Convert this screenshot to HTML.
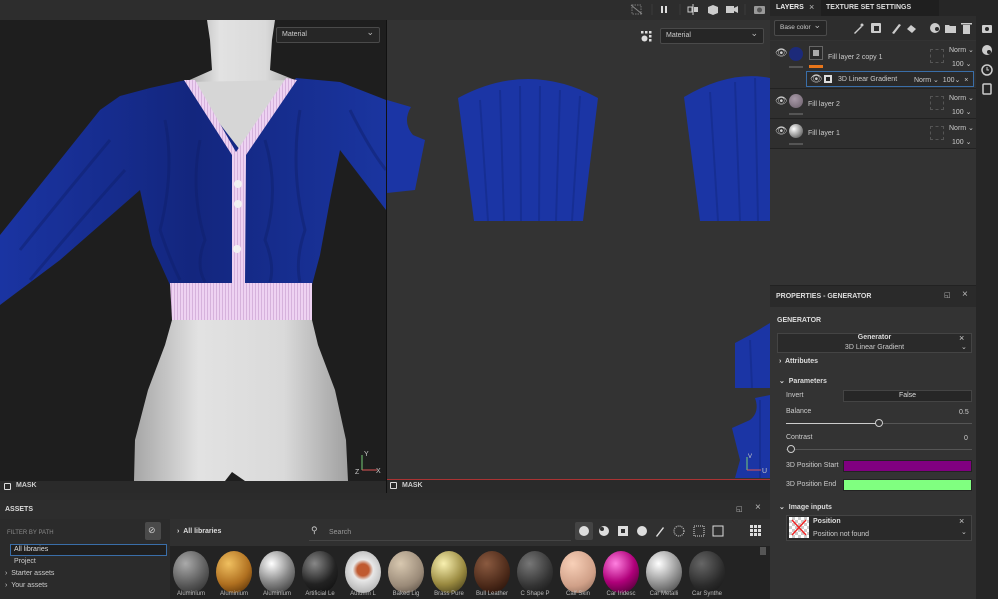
<!DOCTYPE html>
<html><head><meta charset="utf-8">
<style>
*{margin:0;padding:0;box-sizing:border-box}
body{width:998px;height:599px;overflow:hidden;background:#2b2b2b;font-family:"Liberation Sans",sans-serif;color:#ddd;font-size:7px;position:relative}
.abs{position:absolute}
.t{position:absolute;white-space:nowrap}
.b{font-weight:bold}
.dd{position:absolute;border:1px solid #4a4a4a;background:#262626;border-radius:2px;color:#ccc;font-size:7px;padding:3px 5px}
.dd:after{content:"⌄";position:absolute;right:5px;top:-1px;font-size:9px;color:#bbb}
.sph{position:absolute;width:36px;height:42px;border-radius:50%;top:551px}
.lbl{position:absolute;top:591px;font-size:6px;color:#bbb;width:40px;text-align:center}
</style></head><body>

<div class="abs" style="left:0;top:0;width:770px;height:20px;background:#2d2d2d"></div>
<svg class="abs" style="left:628px;top:2px" width="142" height="15" viewBox="0 0 142 15">
 <rect x="4" y="3" width="9" height="9" fill="none" stroke="#777" stroke-dasharray="1.5 1"/><line x1="3" y1="3" x2="14" y2="12" stroke="#888"/>
 <line x1="24" y1="2" x2="24" y2="13" stroke="#3a3a3a"/>
 <rect x="33" y="4" width="2" height="7" fill="#ddd"/><rect x="37" y="4" width="2" height="7" fill="#ddd"/>
 <line x1="52" y1="2" x2="52" y2="13" stroke="#3a3a3a"/>
 <line x1="65" y1="2" x2="65" y2="13" stroke="#ccc"/><rect x="60" y="5" width="4" height="5" fill="none" stroke="#ccc"/><rect x="66" y="5" width="4" height="5" fill="#ccc"/>
 <path d="M80 5l5-2 5 2v6l-5 2-5-2z" fill="#ccc"/>
 <rect x="98" y="4" width="8" height="7" fill="#ccc"/><path d="M106 6l4-2v7l-4-2z" fill="#ccc"/>
 <line x1="117" y1="2" x2="117" y2="13" stroke="#3a3a3a"/>
 <rect x="126" y="4" width="11" height="8" rx="1" fill="#999"/><circle cx="131.5" cy="8" r="2.5" fill="#555"/>
</svg>

<div class="abs" style="left:0;top:20px;width:386px;height:461px;background:#1e1e1e"></div>
<svg class="abs" style="left:0;top:20px" width="386" height="461" viewBox="0 20 386 461">
 <defs>
  <linearGradient id="skin" x1="0" x2="1"><stop offset="0" stop-color="#a6a6a6"/><stop offset=".3" stop-color="#e2e2e2"/><stop offset=".7" stop-color="#dadada"/><stop offset="1" stop-color="#a0a0a0"/></linearGradient>
  <linearGradient id="blue" x1="0" x2="1"><stop offset="0" stop-color="#1a34a2"/><stop offset=".5" stop-color="#13267e"/><stop offset="1" stop-color="#1a35a0"/></linearGradient>
  <pattern id="rib" width="3" height="3" patternUnits="userSpaceOnUse"><rect width="3" height="3" fill="#eed2f2"/><rect width="1" height="3" fill="#d6b2dc"/></pattern>
 </defs>
 <path d="M207 20 L275 20 L272 40 L270 70 L300 82 L185 82 L212 70 L210 40 Z" fill="url(#skin)"/>
 <path d="M186 82 L296 80 L240 150 Z" fill="#d6d6d6"/>
 <path d="M186 80 L150 88 L120 96 L100 110 L0 235 L0 305 L60 260 L140 190 L152 245 L170 285 L312 285 L320 255 L330 200 L340 150 L386 210 L386 100 L340 82 L296 78 L240 150 Z" fill="url(#blue)"/>
 <g stroke="#0f1f6a" stroke-width="3" fill="none" opacity=".45">
  <path d="M165 120 Q175 170 160 230 Q170 260 180 280"/><path d="M200 140 Q190 190 205 240 Q195 265 205 282"/>
  <path d="M265 140 Q280 190 265 240 Q275 265 270 282"/><path d="M300 110 Q290 170 305 230 Q295 260 300 282"/>
  <path d="M20 250 Q60 200 110 140"/><path d="M30 280 Q80 220 125 170"/><path d="M350 110 Q370 150 386 170"/>
 </g>
 <path d="M172 320 L312 320 L318 345 L335 390 L346 440 L348 481 L134 481 L135 440 L148 390 L165 345 Z" fill="url(#skin)"/>
 <path d="M225 481 L232 472 L245 481 Z" fill="#1e1e1e"/>
 <path d="M170 283 L312 283 L312 320 L172 320 Z" fill="url(#rib)"/>
 <path d="M184 80 L195 80 L236 152 L286 78 L297 80 L246 155 L245 283 L232 283 L232 155 Z" fill="url(#rib)"/>
 <circle cx="238" cy="184" r="4" fill="#f2f2f2"/><circle cx="238" cy="204" r="4" fill="#f2f2f2"/><circle cx="237" cy="249" r="4" fill="#f2f2f2"/>
 <g stroke-width="1"><line x1="362" y1="470" x2="362" y2="455" stroke="#7c7"/><line x1="362" y1="470" x2="377" y2="470" stroke="#d55"/></g>
 <text x="364" y="456" fill="#ccc" font-size="7" font-family="Liberation Sans">Y</text><text x="376" y="473" fill="#ccc" font-size="7" font-family="Liberation Sans">X</text><text x="355" y="474" fill="#ccc" font-size="7" font-family="Liberation Sans">Z</text>
</svg>
<div class="dd" style="left:276px;top:27px;width:104px;height:16px">Material</div>
<div class="abs" style="left:0;top:481px;width:386px;height:12px;background:#2a2a2a"></div>
<div class="abs" style="left:4px;top:483px;width:7px;height:7px;border:1.5px solid #ddd;border-radius:1px"></div>
<div class="t b" style="left:16px;top:482px;font-size:7px;color:#ccc">MASK</div>

<div class="abs" style="left:386px;top:20px;width:1px;height:473px;background:#111"></div>
<div class="abs" style="left:387px;top:20px;width:383px;height:460px;background:#333"></div>
<svg class="abs" style="left:387px;top:20px" width="383" height="460" viewBox="387 20 383 460">
 <g fill="#1b35a5">
  <path d="M458 98 Q528 60 598 98 L583 221 L474 221 Z"/>
  <path d="M387 100 L411 107 Q402 122 413 135 L425 140 L415 190 L387 193 Z"/>
  <path d="M684 97 Q730 70 770 78 L770 221 L700 221 Z"/>
  <path d="M770 323 L750 335 L735 343 L735 388 L770 388 Z"/>
  <path d="M770 395 L755 398 Q760 412 750 420 L732 428 L740 460 L735 478 L770 478 Z"/>
 </g>
 <g stroke="#142a88" stroke-width="2" opacity=".6">
  <line x1="480" y1="100" x2="488" y2="221"/><line x1="500" y1="90" x2="504" y2="221"/><line x1="520" y1="86" x2="521" y2="221"/><line x1="540" y1="86" x2="539" y2="221"/><line x1="560" y1="90" x2="556" y2="221"/><line x1="580" y1="96" x2="572" y2="221"/>
  <line x1="710" y1="92" x2="718" y2="221"/><line x1="735" y1="82" x2="740" y2="221"/><line x1="755" y1="78" x2="758" y2="221"/>
  <line x1="750" y1="340" x2="752" y2="388"/><line x1="760" y1="400" x2="760" y2="478"/>
 </g>
 <line x1="747" y1="470" x2="747" y2="457" stroke="#7c7"/><line x1="747" y1="470" x2="761" y2="470" stroke="#d55"/>
 <text x="748" y="458" fill="#ccc" font-size="6" font-family="Liberation Sans">V</text><text x="762" y="473" fill="#ccc" font-size="7" font-family="Liberation Sans">U</text>
</svg>
<svg class="abs" style="left:641px;top:31px" width="12" height="12"><g fill="#ddd"><rect x="0" y="0" width="2.5" height="2.5"/><rect x="4" y="0" width="2.5" height="2.5"/><rect x="8" y="0" width="2.5" height="2.5"/><circle cx="3.5" cy="7.5" r="3"/><rect x="8" y="4" width="2.5" height="2.5"/><rect x="8" y="8" width="2.5" height="2.5"/></g></svg>
<div class="dd" style="left:660px;top:28px;width:104px;height:16px">Material</div>
<div class="abs" style="left:387px;top:479px;width:383px;height:1px;background:#a33"></div>
<div class="abs" style="left:387px;top:480px;width:383px;height:13px;background:#2a2a2a"></div>
<div class="abs" style="left:390px;top:482px;width:7px;height:7px;border:1.5px solid #ddd;border-radius:1px"></div>
<div class="t b" style="left:402px;top:482px;font-size:7px;color:#ccc">MASK</div>

<div class="abs" style="left:770px;top:0;width:206px;height:599px;background:#333"></div>
<div class="abs" style="left:770px;top:0;width:206px;height:16px;background:#262626"></div>
<div class="abs" style="left:821px;top:0;width:118px;height:16px;background:#1f1f1f"></div>
<div class="t b" style="left:776px;top:4px;color:#eee">LAYERS</div>
<div class="t" style="left:809px;top:2px;font-size:9px;color:#bbb">×</div>
<div class="t b" style="left:826px;top:4px;color:#ddd">TEXTURE SET SETTINGS</div>
<div class="abs" style="left:770px;top:16px;width:206px;height:24px;background:#2d2d2d"></div>
<div class="dd" style="left:774px;top:20px;width:53px;height:16px;font-size:6.5px">Base color</div>
<svg class="abs" style="left:852px;top:21px" width="122" height="14"><g fill="#ccc"><path d="M2 12l7-7 1 1-7 7z"/><circle cx="10" cy="4" r="1.5"/><rect x="19" y="2" width="10" height="10" rx="1"/><path d="M40 12l7-9 2 1-7 9z"/><path d="M59 4l5 4-4 4-5-4z"/><circle cx="83" cy="7" r="5"/><path d="M93 4h4l1 1h6v7h-11z"/><rect x="111" y="4" width="7" height="9"/><rect x="109" y="2" width="11" height="1.5"/></g><rect x="22" y="5" width="5" height="5" fill="#2d2d2d"/><circle cx="85" cy="8" r="2" fill="#2d2d2d"/></svg>

<div class="abs" style="left:770px;top:41px;width:206px;height:108px;background:#2f2f2f"></div>
<div class="abs" style="left:770px;top:88px;width:206px;height:1px;background:#222"></div>
<div class="abs" style="left:770px;top:118px;width:206px;height:1px;background:#222"></div>
<div class="abs" style="left:770px;top:148px;width:206px;height:1px;background:#222"></div>
<div class="t" style="left:775px;top:48px;font-size:10px;color:#ccc">👁</div>
<div class="abs" style="left:789px;top:47px;width:14px;height:14px;border-radius:50%;background:#1c2a7a"></div>
<div class="abs" style="left:789px;top:66px;width:14px;height:2px;background:#555"></div>
<div class="abs" style="left:809px;top:46px;width:14px;height:14px;border:1px solid #666;background:#2a2a2a"></div>
<div class="abs" style="left:813px;top:50px;width:6px;height:6px;background:#aaa"></div>
<div class="abs" style="left:809px;top:65px;width:14px;height:3px;background:#e8751a"></div>
<div class="t" style="left:828px;top:54px;color:#ccc">Fill layer 2 copy 1</div>
<div class="abs" style="left:930px;top:49px;width:14px;height:14px;border:1px dashed #555"></div>
<div class="t" style="left:949px;top:46px;color:#ccc">Norm ⌄</div>
<div class="t" style="left:952px;top:60px;color:#ccc">100 ⌄</div>
<div class="abs" style="left:806px;top:71px;width:168px;height:16px;border:1px solid #3a6ea8;background:#2a2a2a"></div>
<div class="t" style="left:810px;top:74px;font-size:10px;color:#ccc">👁</div>
<div class="abs" style="left:824px;top:75px;width:8px;height:8px;background:#ddd"></div>
<div class="abs" style="left:826px;top:77px;width:4px;height:4px;background:#222"></div>
<div class="t" style="left:838px;top:76px;color:#ccc">3D Linear Gradient</div>
<div class="t" style="left:914px;top:76px;color:#ccc">Norm ⌄ &nbsp;100⌄ &nbsp;×</div>
<div class="t" style="left:775px;top:96px;font-size:10px;color:#ccc">👁</div>
<div class="abs" style="left:789px;top:94px;width:14px;height:14px;border-radius:50%;background:radial-gradient(circle at 40% 35%,#a89aa8,#6a5e6a)"></div>
<div class="abs" style="left:789px;top:113px;width:14px;height:2px;background:#555"></div>
<div class="t" style="left:808px;top:101px;color:#ccc">Fill layer 2</div>
<div class="abs" style="left:930px;top:96px;width:14px;height:14px;border:1px dashed #555"></div>
<div class="t" style="left:949px;top:94px;color:#ccc">Norm ⌄</div>
<div class="t" style="left:952px;top:108px;color:#ccc">100 ⌄</div>
<div class="t" style="left:775px;top:126px;font-size:10px;color:#ccc">👁</div>
<div class="abs" style="left:789px;top:124px;width:14px;height:14px;border-radius:50%;background:radial-gradient(circle at 35% 35%,#fff,#777 70%,#333)"></div>
<div class="abs" style="left:789px;top:143px;width:14px;height:2px;background:#555"></div>
<div class="t" style="left:808px;top:130px;color:#ccc">Fill layer 1</div>
<div class="abs" style="left:930px;top:126px;width:14px;height:14px;border:1px dashed #555"></div>
<div class="t" style="left:949px;top:124px;color:#ccc">Norm ⌄</div>
<div class="t" style="left:952px;top:138px;color:#ccc">100 ⌄</div>

<div class="abs" style="left:770px;top:285px;width:206px;height:1px;background:#222"></div>
<div class="abs" style="left:770px;top:286px;width:206px;height:21px;background:#2a2a2a"></div>
<div class="t b" style="left:776px;top:293px;color:#ddd;font-size:7px">PROPERTIES - GENERATOR</div>
<div class="t" style="left:944px;top:291px;color:#bbb">◱</div>
<div class="t" style="left:962px;top:289px;color:#bbb;font-size:10px">×</div>
<div class="t b" style="left:777px;top:317px;color:#ddd">GENERATOR</div>
<div class="abs" style="left:777px;top:333px;width:195px;height:20px;border:1px solid #444;background:#2a2a2a"></div>
<div class="t b" style="left:777px;top:334px;width:195px;text-align:center;color:#ddd">Generator</div>
<div class="t" style="left:777px;top:344px;width:195px;text-align:center;color:#ccc">3D Linear Gradient</div>
<div class="t" style="left:959px;top:333px;color:#ccc;font-size:9px">×</div>
<div class="t" style="left:961px;top:343px;color:#ccc">⌄</div>
<div class="t b" style="left:779px;top:358px;color:#ddd">›&nbsp; Attributes</div>
<div class="t b" style="left:779px;top:377px;color:#ddd">⌄&nbsp; Parameters</div>
<div class="t" style="left:786px;top:392px;color:#ccc">Invert</div>
<div class="abs" style="left:843px;top:390px;width:129px;height:12px;border:1px solid #444;background:#262626"></div>
<div class="t" style="left:843px;top:392px;width:129px;text-align:center;color:#ddd">False</div>
<div class="t" style="left:786px;top:408px;color:#ccc">Balance</div>
<div class="t" style="left:959px;top:409px;color:#ccc">0.5</div>
<div class="abs" style="left:786px;top:423px;width:186px;height:1px;background:#555"></div>
<div class="abs" style="left:786px;top:423px;width:93px;height:1px;background:#ccc"></div>
<div class="abs" style="left:875px;top:419px;width:8px;height:8px;border-radius:50%;border:1.5px solid #ccc;background:#333"></div>
<div class="t" style="left:786px;top:434px;color:#ccc">Contrast</div>
<div class="t" style="left:964px;top:435px;color:#ccc">0</div>
<div class="abs" style="left:786px;top:449px;width:186px;height:1px;background:#555"></div>
<div class="abs" style="left:787px;top:445px;width:8px;height:8px;border-radius:50%;border:1.5px solid #ccc;background:#333"></div>
<div class="t" style="left:786px;top:462px;color:#ccc">3D Position Start</div>
<div class="abs" style="left:843px;top:460px;width:129px;height:12px;border:1px solid #222;background:#800080"></div>
<div class="t" style="left:786px;top:481px;color:#ccc">3D Position End</div>
<div class="abs" style="left:843px;top:479px;width:129px;height:12px;border:1px solid #222;background:#80ff80"></div>
<div class="t b" style="left:779px;top:503px;color:#ddd">⌄&nbsp; Image inputs</div>
<div class="abs" style="left:786px;top:515px;width:186px;height:26px;border:1px solid #444;background:#2a2a2a"></div>
<div class="abs" style="left:789px;top:517px;width:20px;height:21px;background:repeating-conic-gradient(#ccc 0 25%,#fff 0 50%) 0 0/6px 6px"></div>
<svg class="abs" style="left:789px;top:517px" width="20" height="21"><path d="M3 3L17 18M17 3L3 18" stroke="#e22" stroke-width="1.5"/></svg>
<div class="t b" style="left:813px;top:518px;color:#ddd">Position</div>
<div class="t" style="left:813px;top:531px;color:#ccc">Position not found</div>
<div class="t" style="left:959px;top:516px;color:#ccc;font-size:9px">×</div>
<div class="t" style="left:961px;top:528px;color:#ccc">⌄</div>

<div class="abs" style="left:976px;top:0;width:22px;height:599px;background:#262626"></div>
<svg class="abs" style="left:980px;top:22px" width="14" height="76"><g fill="#ccc"><rect x="2" y="3" width="10" height="8" rx="1"/><circle cx="7" cy="28" r="5"/><circle cx="7" cy="48" r="5" fill="none" stroke="#ccc" stroke-width="1.5"/><rect x="3" y="62" width="8" height="10" rx="1" fill="none" stroke="#ccc" stroke-width="1.5"/></g><circle cx="7" cy="7" r="2" fill="#262626"/><circle cx="9" cy="30" r="2" fill="#262626"/><path d="M7 45v3h2" stroke="#ccc" fill="none"/></svg>

<div class="abs" style="left:0;top:493px;width:770px;height:106px;background:#2b2b2b"></div>
<div class="abs" style="left:0;top:500px;width:770px;height:19px;background:#2d2d2d"></div>
<div class="t b" style="left:5px;top:506px;color:#ddd;font-size:7px">ASSETS</div>
<div class="t" style="left:736px;top:505px;color:#bbb">◱</div>
<div class="t" style="left:755px;top:502px;color:#bbb;font-size:10px">×</div>
<div class="abs" style="left:0;top:519px;width:170px;height:80px;background:#2b2b2b"></div>
<div class="t" style="left:7px;top:530px;color:#888;font-size:6px">FILTER BY PATH</div>
<div class="abs" style="left:145px;top:522px;width:16px;height:18px;background:#4a4a4a;border-radius:2px"></div>
<div class="t" style="left:148px;top:525px;color:#ccc;font-size:9px">⊘</div>
<div class="abs" style="left:10px;top:544px;width:157px;height:12px;border:1px solid #3a6ea8;background:#1f1f1f"></div>
<div class="t" style="left:14px;top:546px;color:#ddd">All libraries</div>
<div class="t" style="left:14px;top:558px;color:#ccc">Project</div>
<div class="t" style="left:5px;top:570px;color:#ccc">› &nbsp;Starter assets</div>
<div class="t" style="left:5px;top:582px;color:#ccc">› &nbsp;Your assets</div>
<div class="abs" style="left:170px;top:519px;width:600px;height:27px;background:#303030"></div>
<div class="t b" style="left:177px;top:528px;color:#ddd">› &nbsp;All libraries</div>
<div class="t" style="left:311px;top:525px;color:#ccc;font-size:9px">⚲</div>
<div class="t" style="left:329px;top:529px;color:#999">Search</div>
<div class="abs" style="left:309px;top:540px;width:262px;height:1px;background:#444"></div>
<div class="abs" style="left:575px;top:522px;width:18px;height:18px;background:#444;border-radius:2px"></div>
<svg class="abs" style="left:578px;top:524px" width="200" height="14"><g fill="#ddd"><circle cx="6" cy="7" r="5"/><circle cx="26" cy="7" r="5"/><rect x="40" y="2" width="10" height="10"/><circle cx="64" cy="7" r="5"/><path d="M78 12l7-9 1 1-7 9z"/><circle cx="101" cy="7" r="5" fill="none" stroke="#ddd" stroke-dasharray="1 1"/><rect x="116" y="2" width="10" height="10" fill="none" stroke="#ddd" stroke-dasharray="1 1"/><rect x="135" y="2" width="10" height="10" fill="none" stroke="#ddd"/><rect x="172" y="1" width="3" height="3"/><rect x="176" y="1" width="3" height="3"/><rect x="180" y="1" width="3" height="3"/><rect x="172" y="5" width="3" height="3"/><rect x="176" y="5" width="3" height="3"/><rect x="180" y="5" width="3" height="3"/><rect x="172" y="9" width="3" height="3"/><rect x="176" y="9" width="3" height="3"/><rect x="180" y="9" width="3" height="3"/></g><circle cx="24" cy="5" r="2" fill="#303030"/><rect x="43" y="5" width="4" height="4" fill="#303030"/></svg>
<div class="abs" style="left:170px;top:546px;width:600px;height:53px;background:#232323"></div>
<div class="abs" style="left:760px;top:547px;width:6px;height:8px;background:#555"></div>

<div class="sph" style="left:173px;background:radial-gradient(circle at 35% 30%,#aaa,#555 60%,#222)"></div>
<div class="sph" style="left:216px;background:radial-gradient(circle at 35% 30%,#f0c060,#b07020 55%,#402000)"></div>
<div class="sph" style="left:259px;background:radial-gradient(circle at 35% 30%,#fff,#888 50%,#222)"></div>
<div class="sph" style="left:302px;background:radial-gradient(circle at 35% 30%,#888,#222 55%,#0a0a0a)"></div>
<div class="sph" style="left:345px;background:radial-gradient(circle at 50% 45%,#c05a30 20%,#e8e8e8 35%,#999)"></div>
<div class="sph" style="left:388px;background:radial-gradient(circle at 35% 30%,#d8c8b0,#9a8a78 60%,#4a4038)"></div>
<div class="sph" style="left:431px;background:radial-gradient(circle at 35% 30%,#f8f0b0,#9a8a40 55%,#302a10)"></div>
<div class="sph" style="left:474px;background:radial-gradient(circle at 35% 30%,#8a5a40,#4a2818 60%,#1a0a05)"></div>
<div class="sph" style="left:517px;background:radial-gradient(circle at 35% 30%,#777,#333 60%,#111)"></div>
<div class="sph" style="left:560px;background:radial-gradient(circle at 35% 30%,#f8d0b8,#d0a088 60%,#806050)"></div>
<div class="sph" style="left:603px;background:radial-gradient(circle at 35% 30%,#ff80e0,#b0007a 50%,#300020)"></div>
<div class="sph" style="left:646px;background:radial-gradient(circle at 35% 30%,#fff,#999 50%,#333)"></div>
<div class="sph" style="left:689px;background:radial-gradient(circle at 35% 30%,#666,#2a2a2a 60%,#111)"></div>
<div class="lbl" style="left:171px">Aluminium</div><div class="lbl" style="left:214px">Aluminium</div><div class="lbl" style="left:257px">Aluminium</div><div class="lbl" style="left:300px">Artificial Le</div><div class="lbl" style="left:343px">Autumn L</div><div class="lbl" style="left:386px">Baked Lig</div><div class="lbl" style="left:429px">Brass Pure</div><div class="lbl" style="left:472px">Bull Leather</div><div class="lbl" style="left:515px">C Shape P</div><div class="lbl" style="left:558px">Calf Skin</div><div class="lbl" style="left:601px">Car Iridesc</div><div class="lbl" style="left:644px">Car Metalli</div><div class="lbl" style="left:687px">Car Synthe</div>
</body></html>
